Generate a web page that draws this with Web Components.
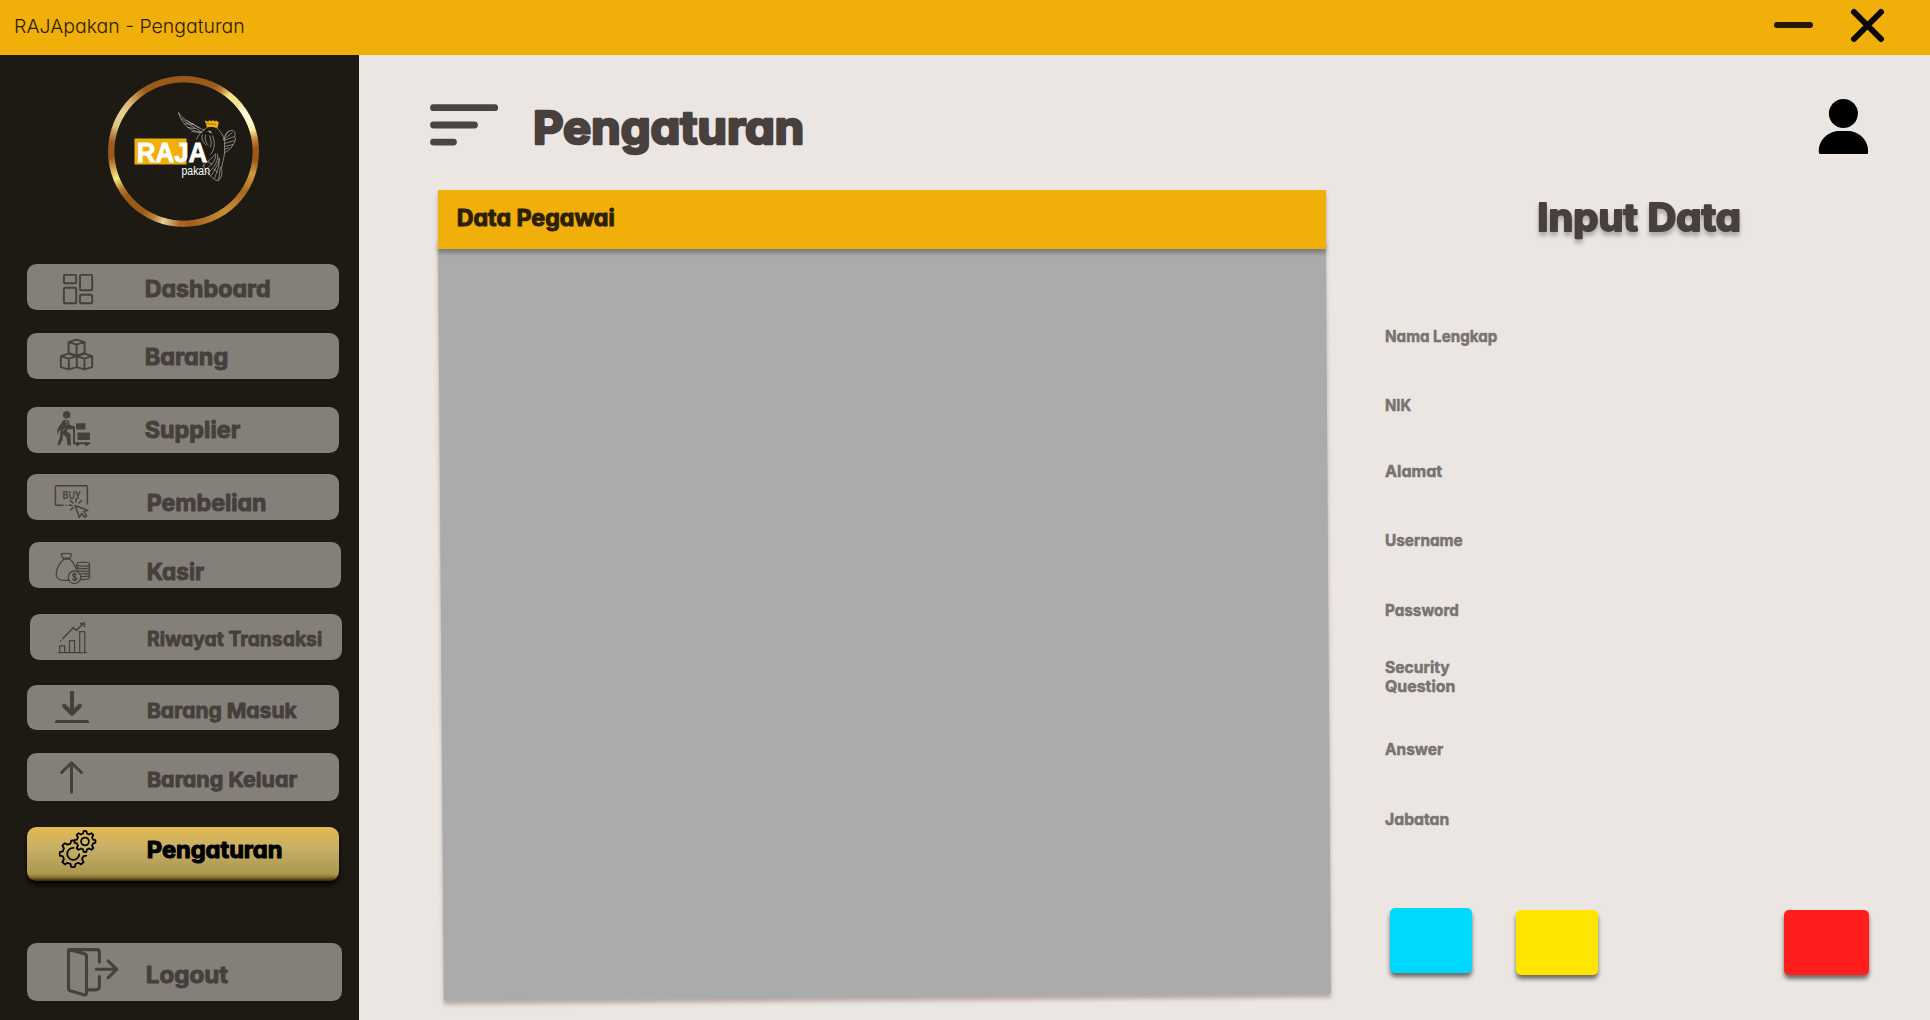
<!DOCTYPE html>
<html lang="id">
<head>
<meta charset="utf-8">
<title>RAJApakan - Pengaturan</title>
<style>
html,body{margin:0;height:100%;overflow:hidden;font-family:Inter,Lato,sans-serif}
</style>
</head>
<body>
<raja-app></raja-app>
<script>
/* Text line whose box is exactly the capitals: w = ink width, cap = capital height. */
class FitText extends HTMLElement{
  connectedCallback(){
    const g=n=>this.getAttribute(n);
    const w=+g('w'),cap=+g('cap'),weight=g('weight')||700,st=+(g('stroke')||0);
    const fs=(cap-st)/0.727,lb=(+(g('bearing')||0.075))*fs,t=this.textContent.trim();
    const tail=/[adnu]$/.test(t)?0.065*fs:0.03*fs;
    this.attachShadow({mode:'open'}).innerHTML=`<style>
      :host{display:block;flex:none;width:${w}px;height:${cap}px}
      svg{display:block;overflow:visible}
      text{font:${weight} ${fs}px Inter,Lato,sans-serif;font-feature-settings:"cv11","ss03";fill:currentColor;stroke:currentColor;stroke-width:${st}px;stroke-linejoin:round}
    </style><svg width="${w}" height="${cap}"><text x="${st/2-lb}" y="${cap-st/2+.2}" textLength="${w-st+lb+tail}" lengthAdjust="spacingAndGlyphs">${t}</text></svg>`;
  }
}
customElements.define('fit-text',FitText);

/* Menu icons: coordinates are pixels inside the menu button. */
const ICONS={
dashboard:`<g fill="none" stroke-width="1.9"><rect x="63.9" y="10.9" width="12.3" height="8.3" rx="1" transform="translate(-27)"/><rect x="53" y="10.9" width="12.2" height="15.4" rx="1"/><rect x="36.9" y="23.8" width="12.3" height="15.4" rx="1"/><rect x="53" y="30.8" width="12.2" height="8.4" rx="1"/></g>`,
barang:`<g fill="none" stroke-width="1.9" stroke-linejoin="round"><path d="M41.6 9.2 49.6 6.6 57.6 9.2V20L49.6 22.8 41.6 20ZM41.6 9.2l8 2.5 8-2.5M49.6 11.7v10.8"/><path d="M33.8 23.2l8-2.6 8 2.6v10.9l-8 2.2-8-2.2zM33.8 23.2l8 2.5 8-2.5M41.8 25.7v10.4M49.8 23.2l7.7-2.6 7.7 2.6v10.9l-7.7 2.2-7.7-2.2M49.8 23.2l7.7 2.5 7.7-2.5M57.5 25.7v10.4"/></g>`,
supplier:`<g stroke="none"><circle cx="39.7" cy="7.8" r="3.8"/><rect x="49" y="16.2" width="9.4" height="6.3" rx="1"/><rect x="50.5" y="25.6" width="12.5" height="7.4" rx=".8"/><path d="M35.8 13.7c2-1.6 6-1 6.4 1.2l.6 3 4.7 1.3v3h-6.6l-1.5 1.7 4 3 .6 10c.2 2.2-3.5 2.2-3.7.2l-1-7-3.2-2.5-.6 5.4-2.7 4.8c-1.500 1.800-2.800.6-1.600-3l1.700-4 .5-8c-2 1.300-2.700 3.400-1.800 6-1.800-2.600-2-5.500.2-9l1.800-2.500z"/></g><path d="M42 20.300h5v16h16" fill="none" stroke-width="2"/><circle cx="50.500" cy="37.300" r="1.800" stroke="none"/><circle cx="59.500" cy="37.300" r="1.800" stroke="none"/><path d="M38 14.200q2.400-.4 2.600 2.200l-.4 1.600M37.500 21.500l-1.300 2.500" fill="none" stroke="#857f7a" stroke-width=".8"/>`,
beli:`<g fill="none" stroke-width="1.5" stroke-linejoin="round" stroke-linecap="round"><path d="M36 31.300h-6.300q-1.300 0-1.300-1.300V13q0-1.300 1.300-1.300h29.400q1.300 0 1.300 1.300v17M39 31.300h.1M42 31.300h3"/><path d="M48 31.500l4.400 12 2.300-4 3 3.800 2-1.700-2.900-4 4-1.200zM49 24.500v3.600M43.400 26.500l2.500 2.500M54.600 26.500l-2.500 2.500M46 33.600l-2.400 2.400"/></g><text x="35.6" y="25.2" textLength="18" lengthAdjust="spacingAndGlyphs" font-family="Lato" font-weight="700" font-size="11.5" stroke="none">BUY</text>`,
kasir:`<g fill="none" stroke-width="1.25" stroke-linejoin="round"><path d="M34.500 17.500c-5.500 4.500-9.300 14-6 18.300 1.200 2 3 2.500 6 2.500h5.300M41.200 17.400c3.600 3 5.200 7 6.200 10.500M34.500 17.200l-2.400-5c3-1 8.500-1 10.600 0l-2.300 5zM34 16h7"/><circle cx="45.500" cy="35.200" r="6.300"/><ellipse cx="54.200" cy="22.200" rx="6.300" ry="2"/><path d="M47.900 22.500v5M60.500 22.500v13.200c0 1-3.800 2-8.500 1.800M48 25.200c1 2 11.500 2 12.400 0M48.300 28.300c2.500 1.500 11 1.400 12.100-.3M51.500 31.600c4 .4 8 0 8.900-1.300M52 34.500c4 .3 7.600 0 8.400-1.300"/><path d="M47.700 33c-.3-1.500-4.200-1.600-4.200.3 0 2 4.300 1.200 4.300 3.300 0 2-4.100 2-4.500 0M45.600 30.600v9"/></g>`,
riwayat:`<g fill="none" stroke-width="1.25"><path d="M28 38.600h29M29.700 38.400v-6.500h5v6.500M39.500 38.400V26.500h5v11.900M49.700 38.400V17.500h5v20.900"/><path d="M32.500 24.800l10.800-11.100 3.200 2.500 7.500-7.300M50 9.800l4.500-.7v4" stroke-width="1.5"/><path d="M30.200 27.200l1-1"/></g>`,
masuk:`<g fill="none" stroke-width="4.2"><path d="M45 6v22"/><path d="M37.200 20.700l7.800 8 7.800-8" stroke-linecap="round" stroke-linejoin="round"/></g><path d="M28 38v-1.300q0-1.700 1.700-1.700h30.600q1.700 0 1.700 1.700v1.300z" stroke="none"/>`,
keluar:`<path d="M44.500 39.300V9.800M34.600 19.500l9.900-9.700 9.900 9.700" fill="none" stroke-width="3" stroke-linecap="round" stroke-linejoin="round"/>`,
logout:`<g fill="none" stroke-width="3.1" stroke-linecap="round" stroke-linejoin="round"><path d="M42 6.600h28q2.400 0 2.400 2.400v10M42.500 6.800L57.500 10.800q2 .8 2 2.800v36q0 3-2.600 2.200L43 47.800q-1.500-.5-1.500-2.500V7.600M72.400 33.500v9.800q0 3.600-4 3.600H61M69.200 26.300h20.500M81.200 18l8.600 8.300-8.600 8.300"/></g>`
};
/* Outline of a cog with n teeth. */
function cog(cx,cy,r1,r2,n,rot){
  let d='';
  for(let i=0;i<n;i++){
    [[-.31,r1],[-.17,r2],[.17,r2],[.31,r1]].forEach(([o,r],k)=>{
      const a=(i+o)/n*2*Math.PI+rot,x=(cx+r*Math.cos(a)).toFixed(2),y=(cy+r*Math.sin(a)).toFixed(2);
      d+=(i||k?(k==2?`A${r2} ${r2} 0 0 1 `:k==0?`A${r1} ${r1} 0 0 1 `:'L'):'M')+x+' '+y;
    });
  }
  return d+'Z';
}
ICONS.gear=`<defs><mask id="m"><path fill="#fff" stroke="none" d="M0 0h100v60H0z"/><path fill="#000" stroke="none" d="M45.500 0H80V28H58L48 24z"/></mask></defs><g fill="none" stroke-width="1.8" stroke-linejoin="round"><path d="${cog(58,14.5,8.2,10.5,8,-1.57)}"/><circle cx="58" cy="14.5" r="3.9"/><g mask="url(#m)"><path d="${cog(46,26.8,10.5,13.3,8,1.57)}"/></g><path d="M46.500 20.800a6 6 0 1 0 5.700 6.500" stroke-linecap="round"/></g>`;

/* Button in the sidebar. The label goes in the slot. */
class MenuItem extends HTMLElement{
  connectedCallback(){
    const g=n=>this.getAttribute(n),h=+g('h');
    this.attachShadow({mode:'open'}).innerHTML=`<style>
      :host{display:flex;flex:none;box-sizing:border-box;width:${g('w')||312}px;height:${h}px;margin:${g('gap')}px 0 0 ${g('x')||27}px;border-radius:9.5px;background:#857f7a;color:#45403c}
      :host([active]){color:#000;background:linear-gradient(#e5b951 0,#c8b065 20px,#ac9750 47px,#8b7733 50px,#4a3813 53px,#39280f 54px);box-shadow:0 4px 5px #000c}
      svg{flex:none;width:${g('lx')}px;height:${h}px;overflow:visible;fill:currentColor;stroke:currentColor}
      ::slotted(*){margin-top:${g('ty')}px}
    </style><svg>${ICONS[g('icon')]}</svg><slot></slot>`;
  }
}
customElements.define('menu-item',MenuItem);

class RajaLogo extends HTMLElement{
  connectedCallback(){
    this.attachShadow({mode:'open'}).innerHTML=`<style>
      :host{display:grid;flex:none;width:151px;height:151px;margin:20.5px 0 0 107.5px;border-radius:50%;background:radial-gradient(circle closest-side,#1d1a13 0 68.7px,transparent 69.5px),conic-gradient(#9c5a1a 0 25deg,#b87930 31deg,#f2e27f 39deg,#f3e38e 49deg,#fffce8 58deg,#fbf3a8 72deg,#c78a3a 80deg,#9c5a1a 87deg 97deg,#d09a3c 108deg,#a96820 124deg,#c8902e 145deg,#b87a28 158deg,#a05c1b 175deg,#a9682a 183deg,#e6cf98 196deg,#b9803c 204deg,#9c5a1a 214deg 232deg,#b87830 239deg,#f7ea7c 248deg,#d9a74e 256deg,#9c5a1a 265deg 277deg,#dfc283 291deg,#e7d294 302deg,#dcb977 311deg,#9c5a1a 328deg 360deg)}
      svg{display:block}
    </style><svg width="151" height="151" viewBox="107.5 75.5 151 151">
      <path fill="#f1af0a" d="M134 138h52v26h-52z"/>
      <g fill="none" stroke="#c9c8c4" stroke-width=".6" stroke-linejoin="round">
        <path d="M178 112c5 8 12 10 26 18M178 112c3 10 9 18 23 20M181 118c7 6 13 9 21 14M184 123l8 1M187 127l8 1M191 131l9 1M186 120l7 4M192 123l7 5"/>
        <path d="M205 128c3-3 10-3 13 1 4 4 7 10 6 17 1 8-2 15-3 22 1 5 0 9-3 12-4 0-7-3-9-6-3-2-5-5-6-10"/>
        <path d="M205 128c-4 3-7 6-9 11M207 131c2-1 4 0 4 2M202 134c-2 6 2 9 4 11M205 134c-1 6 1 9 3 11M209 135c2 4 2 9 1 12M212 135c3 8 2 14-2 19"/>
        <path d="M223 139c3-4 1-8 8-9 4 0 4 4 3 6 2 3 0 6-2 9-2 4-5 6-8 7M223 139l9-7M223 140l11-4M224 143l10-3M224 146l9-2M224 149l5-2M224 136l4-5"/>
        <path d="M202 166c4-6 9-6 12-12M206 168c6-4 10-9 9-15M209 171c6-5 9-12 8-18M211 175c4-8 8-12 8-18M214 178c3-9 6-14 4-20M218 180l2-14M207 161l5 3M213 168l4 4"/>
      </g>
      <circle cx="209.5" cy="131.5" r=".8" fill="#eee"/>
      <path fill="#f1af0a" d="M204.200 119.800l3.500 1.400 1.200-1.700 2 1.600 1.500-1.600 2 1.600 1.400-1.200 2.600 2.200-1.500 5.400-4-.9-6.500-.2z"/><path d="M206 123l10 1" stroke="#1d1a13" stroke-width=".7" stroke-dasharray="1 1"/>
      <g fill="#fff" font-family="Liberation Sans,Arial,sans-serif">
      <text x="136.300" y="161.200" font-size="27.500" font-weight="700" textLength="70.500" lengthAdjust="spacingAndGlyphs" stroke="#fff" stroke-width=".8">RAJA</text>
      <text x="181" y="174.500" font-size="12" textLength="28.500" lengthAdjust="spacingAndGlyphs">pakan</text></g>
    </svg>`;
  }
}
customElements.define('raja-logo',RajaLogo);

class RajaSidebar extends HTMLElement{
  connectedCallback(){
    this.attachShadow({mode:'open'}).innerHTML=`<style>
      :host{display:flex;flex-direction:column;flex:none;width:359px;height:965px;background:#1d1a13}
    </style>
    <raja-logo></raja-logo>
    <menu-item icon="dashboard" h="46" gap="37.5" lx="119" ty="15"><fit-text w="123.5" cap="18" stroke="1">Dashboard</fit-text></menu-item>
    <menu-item icon="barang" h="46" gap="23" lx="119" ty="14"><fit-text w="82" cap="18" stroke="1">Barang</fit-text></menu-item>
    <menu-item icon="supplier" h="46" gap="28" lx="119" ty="13"><fit-text w="94" cap="18" stroke="1">Supplier</fit-text></menu-item>
    <menu-item icon="beli" h="46" gap="21" lx="121" ty="19"><fit-text w="117.5" cap="18" stroke="1">Pembelian</fit-text></menu-item>
    <menu-item icon="kasir" x="29" h="46" gap="22" lx="119" ty="20"><fit-text w="56" cap="18" stroke="1">Kasir</fit-text></menu-item>
    <menu-item icon="riwayat" x="30" h="46" gap="26" lx="118" ty="17.3"><fit-text w="174" cap="15" stroke=".8">Riwayat Transaksi</fit-text></menu-item>
    <menu-item icon="masuk" h="45" gap="25" lx="121" ty="17"><fit-text w="148.5" cap="16" stroke=".9">Barang Masuk</fit-text></menu-item>
    <menu-item icon="keluar" h="48" gap="23" lx="121" ty="18"><fit-text w="149" cap="16" stroke=".9">Barang Keluar</fit-text></menu-item>
    <menu-item icon="gear" h="54" gap="26" lx="121" ty="13" active><fit-text w="133.5" cap="18" stroke="1.1">Pengaturan</fit-text></menu-item>
    <menu-item icon="logout" w="315" h="58" gap="62" lx="120" ty="22"><fit-text w="81" cap="18" stroke="1">Logout</fit-text></menu-item>`;
  }
}
customElements.define('raja-sidebar',RajaSidebar);

class TitleBar extends HTMLElement{
  connectedCallback(){
    this.attachShadow({mode:'open'}).innerHTML=`<style>
      :host{display:flex;flex:none;justify-content:space-between;height:55px;background:#f1af0a;color:#2a1e05}
      fit-text{margin:19.3px 0 0 15.5px} svg{display:block}
    </style><fit-text w="227.5" cap="13.8" weight="280" bearing=".1">RAJApakan - Pengaturan</fit-text>
    <svg width="180" height="55" fill="none" stroke-linecap="round"><path d="M27 25h33" stroke="#261c04" stroke-width="6"/><path d="M104 12l27 27m0-27l-27 27" stroke="#0a0802" stroke-width="6"/></svg>`;
  }
}
customElements.define('title-bar',TitleBar);

class EmployeePanel extends HTMLElement{
  connectedCallback(){
    this.attachShadow({mode:'open'}).innerHTML=`<style>
      :host{display:flex;flex-direction:column;width:893px;height:812px}
      header{display:flex;width:888px;height:59px;background:#f1af0a;color:#2c2003;box-shadow:0 4px 4px #0004;z-index:1}
      header fit-text{margin:18px 0 0 20px}
      svg{display:block;overflow:visible;filter:drop-shadow(0 4px 2px #684d4666)}
    </style><header><fit-text w="156.5" cap="18" stroke="1">Data Pegawai</fit-text></header>
    <svg width="893" height="753"><path d="M0-10H887.800L893 744.500 5.800 751.500z" fill="#ababab"/></svg>`;
  }
}
customElements.define('employee-panel',EmployeePanel);

class InputForm extends HTMLElement{
  connectedCallback(){
    const rows=[['Nama Lengkap',111,99],['NIK',25,57.4],['Alamat',56,53.7],['Username',76.5,56.3],['Password',72,57.4],['Security',63.5,44.7],['Question',68.5,6.7],['Answer',57,50.7],['Jabatan',62.5,57.7]];
    this.attachShadow({mode:'open'}).innerHTML=`<style>
      :host{display:flex;flex-direction:column;width:485px;color:#787370}
      .h{margin:11.5px 0 0 153.500px;color:#47403c;filter:drop-shadow(0 4px 2px #0004)}
      .b{display:flex;margin:82.8px 0 0 4px}
      i{display:block;height:65px;width:82px;border-radius:5px;box-shadow:0 4px 4px #0008;margin-top:2px}
    </style><fit-text class="h" w="200.5" cap="29.3" stroke="2">Input Data</fit-text>
    ${rows.map(([t,w,m])=>`<fit-text w="${w}" cap="12.3" stroke=".5" style="margin-top:${m}px">${t}</fit-text>`).join('')}
    <div class="b"><i style="background:#00d9ff;margin-top:0"></i><i style="background:#ffe500;margin-left:44px"></i><i style="background:#ff1d1d;margin-left:186px;width:85px"></i></div>`;
  }
}
customElements.define('input-form',InputForm);

class SettingsPage extends HTMLElement{
  connectedCallback(){
    this.attachShadow({mode:'open'}).innerHTML=`<style>
      :host{display:flex;flex-direction:column;flex:1;background:#ebe6e2;color:#47403c}
      header{display:flex;height:135px;padding-left:71px}
      header svg{display:block;flex:none}
      header fit-text{margin:55.3px 0 0 35.5px} .u{margin-left:auto}
      main{display:flex;padding-left:79px} input-form{margin-left:54.5px}
    </style><header>
      <svg width="69" height="100" fill="none" stroke="#484642" stroke-width="6.8" stroke-linecap="round"><path d="M3.500 52.700h61.200M3.500 70h41M3.500 87.100h20"/></svg>
      <fit-text w="267.5" cap="35.5" stroke="2.6">Pengaturan</fit-text>
      <svg class="u" width="130" height="110" fill="#000"><circle cx="43.4" cy="58.4" r="14.5"/><path d="M19 98c-1.500-12 9-22 20-22h9c11 0 21.500 10 20 22q0 1-1 1H20q-1 0-1-1z"/></svg>
    </header><main><employee-panel></employee-panel><input-form></input-form></main>`;
  }
}
customElements.define('settings-page',SettingsPage);

class RajaApp extends HTMLElement{
  connectedCallback(){
    this.attachShadow({mode:'open'}).innerHTML=`<style>
      :host{display:flex;flex-direction:column;width:1930px;height:1020px;overflow:hidden}
      div{display:flex;height:965px}
    </style><title-bar></title-bar><div><raja-sidebar></raja-sidebar><settings-page></settings-page></div>`;
  }
}
customElements.define('raja-app',RajaApp);
</script>
</body>
</html>
